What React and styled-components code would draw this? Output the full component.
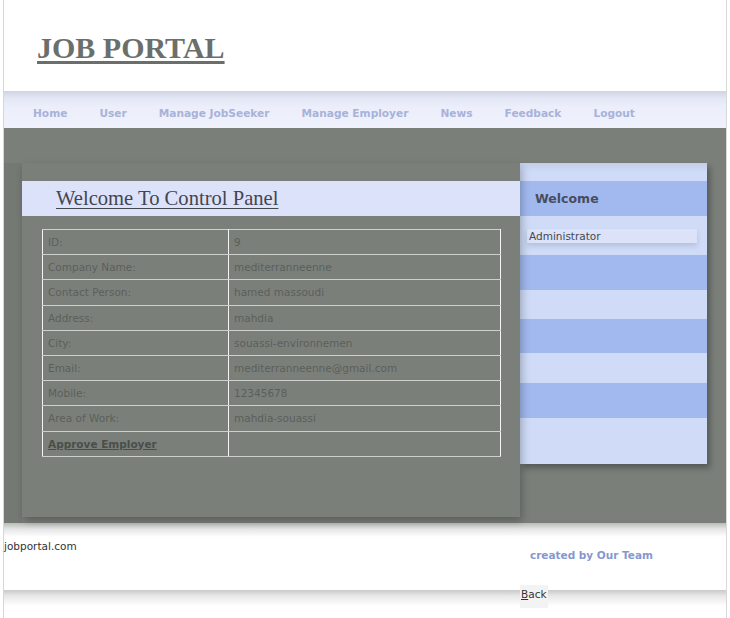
import React from "react";
import styled, { createGlobalStyle } from "styled-components";

const Global = createGlobalStyle`
  html, body { margin: 0; padding: 0; background: #fff; }
  body { font-family: "DejaVu Sans", Verdana, sans-serif; }
`;

const Page = styled.div`
  margin-left: 3px;
  width: 722px;
  border-left: 1px solid #d6d6d6;
  border-right: 1px solid #d9d9d9;
  display: flex;
  flex-direction: column;
`;

const Header = styled.header`
  height: 91px;
  box-sizing: border-box;
  padding: 31px 0 0 33px;
`;

const Title = styled.a`
  font-family: "Liberation Serif", "Times New Roman", serif;
  font-weight: bold;
  font-size: 30px;
  color: #6b6f6b;
  text-decoration: underline;
  text-underline-offset: 3px;
`;

const Nav = styled.nav`
  height: 37px;
  display: flex;
  align-items: center;
  gap: 32px;
  padding: 7px 0 0 29px;
  box-sizing: border-box;
  background: linear-gradient(#d0d4e2 0px, #e3e6f4 7px, #eceefb 16px, #eff1fc 100%);
`;

const NavLink = styled.a`
  font-size: 10.6px;
  font-weight: bold;
  color: #a7b3d8;
  text-decoration: none;
`;

const Main = styled.main`
  background: #7a7f7a;
  padding: 35px 19px 6px 18px;
  display: flex;
  align-items: flex-start;
  background-image: linear-gradient(90deg, rgba(0,0,0,0.05) 0, rgba(0,0,0,0.05) 18px, transparent 18px);
  background-position: 0 35px;
  background-repeat: no-repeat;
`;

const Panel = styled.section`
  width: 498px;
  height: 354px;
  padding-top: 18px;
  box-sizing: border-box;
  background: #7a7f7a;
  box-shadow: 2px 4px 8px rgba(0, 0, 0, 0.25);
  position: relative;
  z-index: 1;
`;

const PanelHead = styled.div`
  height: 35px;
  background: #dde2fb;
  display: flex;
  align-items: center;
  padding-left: 34px;
`;

const PanelTitle = styled.h2`
  margin: 0;
  font-family: "Liberation Serif", "Times New Roman", serif;
  font-weight: normal;
  font-size: 20.6px;
  color: #43464f;
  text-decoration: underline;
  text-underline-offset: 3px;
  text-decoration-thickness: 1px;
`;

const Table = styled.table`
  margin: 13px 0 0 20px;
  width: 459px;
  border-collapse: collapse;
  border: 1px solid #f4f4f4;
  font-size: 10.5px;
  color: #5b5f5b;
`;

const Cell = styled.td`
  height: 24.2px;
  padding: 0 0 0 5px;
  border-top: 1px solid #cdd0cd;
  border-bottom: 1px solid #cdd0cd;
  border-left: 1px solid #f4f4f4;
  border-right: 1px solid #f4f4f4;
  width: ${(p) => (p.$label ? "180px" : "auto")};
  vertical-align: middle;
`;

const Approve = styled.a`
  font-weight: bold;
  color: #4a4e4a;
  text-decoration: underline;
`;

const Sidebar = styled.aside`
  width: 187px;
  display: flex;
  flex-direction: column;
  box-shadow: 3px 4px 6px rgba(0, 0, 0, 0.3);
`;

const Stripe = styled.div`
  height: ${(p) => p.$h}px;
  background: ${(p) => (p.$blue ? "#a1b9ef" : "#cfdbf7")};
  display: flex;
  align-items: ${(p) => (p.$top ? "flex-start" : "center")};
  box-sizing: border-box;
`;

const TopStripe = styled(Stripe)`
  background: linear-gradient(#c3cdea, #cfdbf7 9px);
`;

const SideTitle = styled.h3`
  margin: 0 0 0 15px;
  font-size: 12.5px;
  font-weight: bold;
  color: #474c5e;
`;

const UserBox = styled.div`
  margin: 13px 10px 0 7px;
  flex: 1;
  height: 14px;
  line-height: 14px;
  padding-left: 2px;
  font-size: 10.5px;
  color: #444852;
  background: #dce3f8;
  box-shadow: 0 3px 5px rgba(60, 70, 100, 0.18);
`;

const Footer = styled.footer`
  height: 67px;
  box-sizing: border-box;
  background: linear-gradient(#b9bcb9 0, #e4e5e4 6px, #fff 14px);
  display: flex;
  justify-content: space-between;
  padding: 17px 73px 0 0;
`;

const Domain = styled.span`
  font-size: 10.5px;
  color: #333;
`;

const Credit = styled.span`
  font-size: 10.5px;
  font-weight: bold;
  color: #8797cf;
  margin-top: 9px;
`;

const Bottom = styled.div`
  height: 40px;
  background: linear-gradient(#c9c9c9 0, #e8e8e8 6px, #fff 16px);
  padding-left: 516px;
  display: flex;
  align-items: flex-start;
`;

const BackLink = styled.a`
  display: block;
  margin-top: -5px;
  position: relative;
  width: 28px;
  height: 23px;
  box-sizing: border-box;
  padding: 2px 0 0 1px;
  line-height: 14px;
  background: #f3f3f3;
  font-size: 10.5px;
  color: #333;
  text-decoration: none;
  cursor: pointer;
  u { text-decoration: underline; }
`;

const rows = [
  ["ID:", "9"],
  ["Company Name:", "mediterranneenne"],
  ["Contact Person:", "hamed massoudi"],
  ["Address:", "mahdia"],
  ["City:", "souassi-environnemen"],
  ["Email:", "mediterranneenne@gmail.com"],
  ["Mobile:", "12345678"],
  ["Area of Work:", "mahdia-souassi"],
];

const navItems = ["Home", "User", "Manage JobSeeker", "Manage Employer", "News", "Feedback", "Logout"];

export default function App() {
  return (
    <>
      <Global />
      <Page>
        <Header>
          <Title href="#">JOB PORTAL</Title>
        </Header>
        <Nav>
          {navItems.map((n) => (
            <NavLink key={n} href="#">{n}</NavLink>
          ))}
        </Nav>
        <Main>
          <Panel>
            <PanelHead>
              <PanelTitle>Welcome To Control Panel</PanelTitle>
            </PanelHead>
            <Table>
              <tbody>
                {rows.map(([k, v]) => (
                  <tr key={k}>
                    <Cell $label>{k}</Cell>
                    <Cell>{v}</Cell>
                  </tr>
                ))}
                <tr>
                  <Cell $label><Approve href="#">Approve Employer</Approve></Cell>
                  <Cell />
                </tr>
              </tbody>
            </Table>
          </Panel>
          <Sidebar>
            <TopStripe $h={18} />
            <Stripe $h={35} $blue><SideTitle>Welcome</SideTitle></Stripe>
            <Stripe $h={39} $top><UserBox>Administrator</UserBox></Stripe>
            <Stripe $h={35} $blue />
            <Stripe $h={29} />
            <Stripe $h={34} $blue />
            <Stripe $h={30} />
            <Stripe $h={35} $blue />
            <Stripe $h={46} />
          </Sidebar>
        </Main>
        <Footer>
          <Domain>jobportal.com</Domain>
          <Credit>created by Our Team</Credit>
        </Footer>
        <Bottom>
          <BackLink href="#"><u>B</u>ack</BackLink>
        </Bottom>
      </Page>
    </>
  );
}
